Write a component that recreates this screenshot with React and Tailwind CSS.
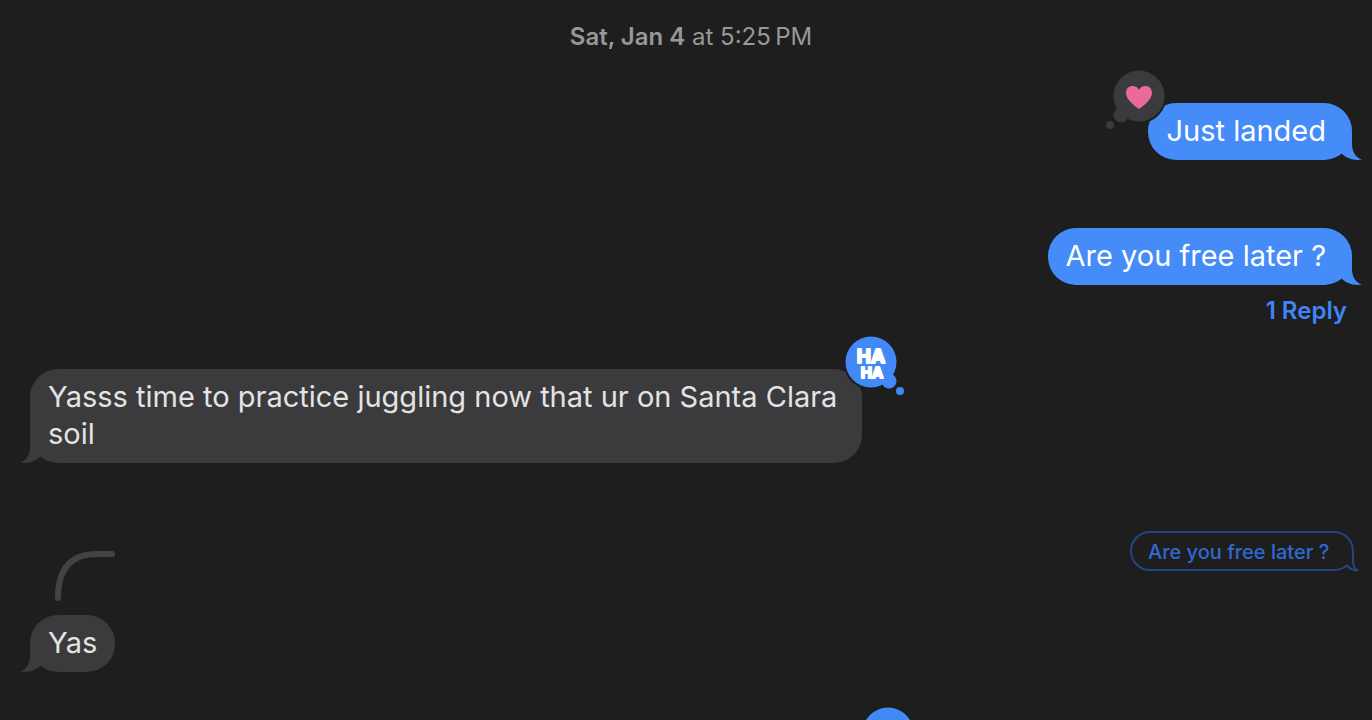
import React from 'react';

function HeartGlyph() {
  return (
    <path
      d="M34 43 C30 40 21 34 21 27 C21 22.500 24 20 27.500 20 C30.500 20 33 21.500 34 24 C35 21.500 37.500 20 40.500 20 C44 20 47 22.500 47 27 C47 34 38 40 34 43 Z"
      fill="#ea6a9a"
    />
  );
}

function HahaGlyph() {
  return (
    <text
      fill="#fff"
      stroke="#fff"
      strokeWidth="2"
      strokeLinejoin="round"
      strokeLinecap="round"
      textAnchor="middle"
      className="font-['Inter',sans-serif] font-bold"
    >
      <tspan x="30" y="31" fontSize="19">HA</tspan>
      <tspan x="31" y="46" fontSize="15">HA</tspan>
    </text>
  );
}

function Tapback({ type }) {
  const heart = type === 'heart';

  return (
    <svg
      role="img"
      aria-label={heart ? 'Loved' : 'Reaction'}
      viewBox="0 0 64 64"
      className={`absolute -top-[37px] size-16 ${heart ? '-left-[43px]' : '-right-[43px]'}`}
    >
      <g
        fill={heart ? '#3b3b3d' : '#4189f7'}
        transform={heart ? undefined : 'translate(64 0) scale(-1 1)'}
      >
        <circle cx="34" cy="30" r="27.500" fill="#1e1e1e" />
        <circle cx="34" cy="30" r="25.500" />
        <circle cx="16" cy="49" r="7.500" />
        <circle cx="5" cy="59" r="4" />
      </g>
      {type === 'heart' && <HeartGlyph />}
      {type === 'haha' && <HahaGlyph />}
    </svg>
  );
}

function Bubble({ mine, tapback, className = '', children }) {
  return (
    <div
      className={`relative w-fit rounded-[28px] pt-[9px] pb-[11px] text-[29px] leading-[37px] ${
        mine
          ? 'self-end bg-[#468cf8] pr-[26px] pl-[18px] text-white'
          : 'self-start bg-[#3b3b3d] px-[18px] text-[#e3e3e4]'
      } ${className}`}
    >
      <svg
        aria-hidden="true"
        viewBox="0 0 32 30"
        className={`absolute bottom-0 h-[30px] w-8 ${
          mine ? '-right-[10px] text-[#468cf8]' : '-left-[10px] -scale-x-100 text-[#3b3b3d]'
        }`}
      >
        <path d="M12 0 H22 V14 C22 22 26 28 32 29.500 C24 31 17 28.500 12 24 Z" fill="currentColor" />
      </svg>
      <p className="relative">{children}</p>
      {tapback && <Tapback type={tapback} />}
    </div>
  );
}

function QuotedMessage({ children }) {
  return (
    <div className="relative -mr-[8px] h-10 w-[230px] pl-[18px] text-[20px] leading-[42px] font-medium text-[#2f69d2]">
      <svg
        aria-hidden="true"
        viewBox="0 0 230 41"
        className="absolute top-0 left-0 h-[41px] w-[230px]"
        fill="none"
        stroke="#214782"
        strokeWidth="2"
      >
        <path d="M20 1 H204 A19 19 0 0 1 223 20 V30 C223 35 225 38 228 39.500 C224 39.500 220 38 217 34.500 C213 37.500 209 39 204 39 H20 A19 19 0 0 1 20 1 Z" />
      </svg>
      <p className="relative">{children}</p>
    </div>
  );
}

function App() {
  return (
    <main className="flex h-screen flex-col overflow-hidden bg-[#1e1e1e] pr-5 pl-[30px] font-['Inter','Liberation_Sans',sans-serif]">
      <time className="mt-[21px] self-center text-[24px] leading-8 text-[#98989a]">
        <span className="font-semibold">Sat, Jan 4</span> at 5:25&#8239;PM
      </time>

      <Bubble mine tapback="heart" className="mt-[50px]">
        Just landed
      </Bubble>

      <Bubble mine className="mt-[68px]">
        Are you free later ?
      </Bubble>
      <button type="button" className="mt-[10px] mr-[5px] self-end text-[24px] leading-8 font-semibold text-[#3f85f6]">
        1 Reply
      </button>

      <Bubble tapback="haha" className="mt-[42px] max-w-[832px]">
        Yasss time to practice juggling now that ur on Santa Clara soil
      </Bubble>

      <div className="mt-[68px] flex items-start justify-between">
        <svg aria-hidden="true" viewBox="0 0 60 50" className="mt-5 ml-[25px] h-[50px] w-[60px]">
          <path
            d="M3 47 C3 17 16 3 42 3 H57"
            fill="none"
            stroke="#434344"
            strokeWidth="6"
            strokeLinecap="round"
          />
        </svg>
        <QuotedMessage>Are you free later ?</QuotedMessage>
      </div>
      <Bubble className="mt-[14px]">Yas</Bubble>

      <Bubble tapback="other" className="mt-[68px] min-w-[849px]" />
    </main>
  );
}

export default App;
